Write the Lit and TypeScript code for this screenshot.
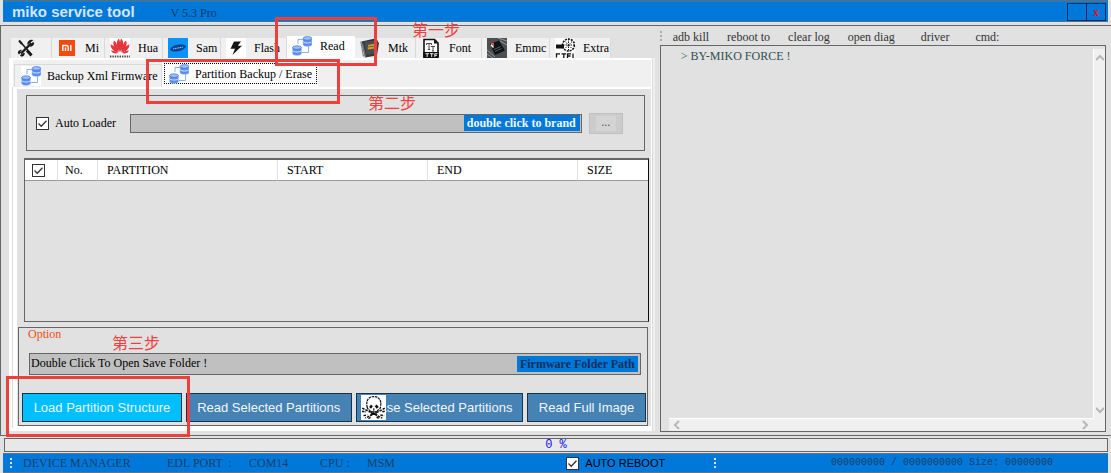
import { LitElement, html, css, svg, nothing } from "lit";
import { customElement, property, state } from "lit/decorators.js";
import { classMap } from "lit/directives/class-map.js";

const databases = svg`
  <path d="M6 8V3.500H12M10 16.500H16.500V10" fill="none" stroke="#8fb0dc"/>
  <g fill="#5b8def" stroke="#a9c8fa" stroke-width=".6">
    <path d="M11 2.500v6c0 2.600 9 2.600 9 0v-6z"/><path d="M.500 11.500v6c0 2.600 9 2.600 9 0v-6z"/>
  </g>
  <g fill="#9cc0fb" stroke="#3e6fd0" stroke-width=".7">
    <ellipse cx="15.500" cy="2.400" rx="4.400" ry="1.800"/><ellipse cx="5" cy="11.600" rx="4.400" ry="1.800"/>
  </g>
  <path d="M11 5.500c1 2 8 2 9 0M.500 14.500c1 2 8 2 9 0" fill="none" stroke="#d3e3ff"/>`;

const icons: Record<string, unknown> = {
  tools: svg`
    <path d="M4 3.500 15 16" stroke="#1a1a1a" stroke-width="1.600"/>
    <path d="M11 12.500 15.500 17.500" stroke="#1a1a1a" stroke-width="3"/>
    <path d="M3 2.500 6 6" stroke="#1a1a1a" stroke-width="2"/>
    <path d="M5 15.500 14.500 6" stroke="#1a1a1a" stroke-width="2.400"/>
    <path d="M17.500 4.500 15.500 6.500 13.500 4.500 15.600 2.600A3.500 3.500 0 0 0 12 6.500M17.500 4.500A3.500 3.500 0 0 1 14 8" fill="none" stroke="#1a1a1a" stroke-width="1.500"/>
    <path d="M2.500 16 4.500 14M4.500 18 6.500 16M2.500 15a3 3 0 0 1 3-2.500M5.500 18a3 3 0 0 0 2.500-3" fill="none" stroke="#1a1a1a" stroke-width="1.500"/>`,
  mi: svg`<rect x="2" y="2" width="16" height="16" fill="#f4490c"/>
    <path d="M5.800 13V7.500H9.500Q11.200 7.500 11.200 9.200V13M8.500 9.500V13M13.800 7V13" fill="none" stroke="#fff" stroke-width="1.400"/>`,
  huawei: svg`<rect width="20" height="20" fill="#fff"/>
    <g fill="#e5343c">
      <path d="M9.600 14C6 9 6 3 8.800.800 10.500 3 10.500 9 9.600 14z"/><path d="M10.400 14C14 9 14 3 11.200.800 9.500 3 9.500 9 10.400 14z"/>
      <path d="M8.800 14.200C3.500 10.500 2.500 5 4 2.800 6.500 4 8 9 8.800 14.200z"/><path d="M11.200 14.200C16.500 10.500 17.500 5 16 2.800 13.500 4 12 9 11.200 14.200z"/>
      <path d="M8.300 14.600C3 13.500.200 9.500.700 6.500 3.500 7 6.500 10.500 8.300 14.600z"/><path d="M11.700 14.600C17 13.500 19.800 9.500 19.300 6.500 16.500 7 13.500 10.500 11.700 14.600z"/>
      <path d="M8 15.100C5 16.300 2 15 1 12.600 3.500 12.500 6 13.500 8 15.100z"/><path d="M12 15.100C15 16.300 18 15 19 12.600 16.500 12.500 14 13.500 12 15.100z"/>
    </g>
    <path d="M0 18.500H20" stroke="#4a4242" stroke-width="2" stroke-dasharray="1.400 1"/>`,
  samsung: svg`<rect width="20" height="20" fill="#0a93f5"/>
    <ellipse cx="10" cy="10" rx="8" ry="3.200" fill="#0a3f92" transform="rotate(-12 10 10)"/>
    <path d="M5 11 15 9" stroke="#8ec4ee" stroke-width="1.200" stroke-dasharray="1.200 .6"/>`,
  flash: svg`<rect width="20" height="20" fill="#fff"/>
    <path d="M8 3.500H15L11.800 7.800H16L6.500 17 9 10.800H4.500z" fill="#141414"/>`,
  db: databases,
  chip: svg`<path d="M1.500 3.500 15 .500 19 5 17 17.500 5 19.500z" fill="#34373a"/>
    <path d="M.800 3.500 3.500 18.500M2.500 5.500 5.500 19" stroke="#757a7e" stroke-width="1.200"/>
    <path d="M4.500 3.500 18 2.500 16.500 15.500 6.500 17z" fill="#4a4d4f"/>
    <path d="M8 7.800 15.500 6.500M7.800 10.500 14.500 9.500" stroke="#d79a2b" stroke-width="1.800"/>`,
  ttf: svg`<path d="M3 1.500H13.500L17 5V18.500H3z" fill="#fff" stroke="#111" stroke-width="1.600"/>
    <path d="M13 1.500V5.500H17z" fill="#111"/>
    <path d="M5.500 7V5.500H10.500V7M8 5.500V11.500M6.800 11.500H9.200M9.800 8.500H14M12 8V13M10.900 13H13.100" fill="none" stroke="#333" stroke-width=".9"/>
    <rect x="2.200" y="14" width="15.600" height="6" fill="#111"/>
    <path d="M4.500 15.700H8M6.200 15.700V19M9 15.700H12.500M10.700 15.700V19M13.800 19V15.700H16.500M13.800 17.300H16" fill="none" stroke="#fff" stroke-width=".9"/>`,
  emmc: svg`<rect width="20" height="20" fill="#4d5052"/>
    <path d="M0 16 6 20M0 12 8 19M13 3 20 7M11 0 20 3" stroke="#92979a" stroke-width="1"/>
    <path d="M3 6 12 2.500 18 12.500 8 17z" fill="#101214"/>
    <path d="M7 11.500 13.500 8.500M8 13.500 14.500 10.500" stroke="#6e7375" stroke-width=".8"/>
    <rect x="4" y="5" width="3" height="3" fill="#e8465a"/>
    <path d="M4 7 6.500 9.500" stroke="#fff" stroke-width="1.400"/>`,
  extra: svg`<rect width="20" height="20" fill="#fff"/>
    <circle cx="13.500" cy="7" r="6" fill="#fff" stroke="#111" stroke-width="1.600" stroke-dasharray="2 1"/>
    <path d="M1 8.500H9" stroke="#111" stroke-width="4"/>
    <path d="M10 3.500 17 10.500M17 3.500 10 10.500M13.500 1V13M8 7H19" stroke="#111" stroke-dasharray="1.500 1"/>
    <path d="M5 15.800H1.500V19.500M6.500 15.800H11M8.800 15.800V20M16 15.800H12.500V20M12.500 18H15.500M18 15.500V20" fill="none" stroke="#111" stroke-width="1.300"/>`,
  skull: svg`<rect width="20" height="20" fill="#fff"/>
    <path d="M5 10C3.500 4 6.500 1.200 10.200 1.200S17 4 15.500 10C15 12 13 11.800 12.800 13.500H7.600C7.500 11.800 5.500 12 5 10z" fill="#fff" stroke="#111" stroke-width="1" stroke-dasharray="2 .6"/>
    <path d="M6.500 9.500 8 7.500 9.500 9 8 11zM11 9 12.500 7.500 14.200 9.500 12.500 11z" fill="#111"/>
    <path d="M10.200 10.500V12.500M8.500 13V15.500M10.200 13V16M12 13V15.500M7.500 15.500H13" stroke="#111" stroke-width=".9"/>
    <path d="M1 10.500 4 12 17 18.500M19 10.500 16.500 12 3.500 18.500M.800 13 4 13.500M19 13 16.500 13.500M2 16.500 5 16M15.500 16 18.500 16.500M6 19 8 17.500M12.500 17.500 14.500 19" fill="none" stroke="#111" stroke-width="1.200" stroke-dasharray="2 .8"/>`,
};

const icon = (name: string) =>
  html`<svg class="icon" viewBox="0 0 20 20" aria-hidden="true">${icons[name]}</svg>`;

@customElement("tick-box")
export class TickBox extends LitElement {
  @property() label = "";
  @property({ type: Boolean }) bare = false;

  static styles = css`
    :host { display: flex; }
    label { display: flex; align-items: center; gap: 6px; white-space: nowrap; }
    input {
      appearance: none; flex: none; width: 13px; height: 13px; margin: 0;
      border: 1px solid #333; background: #fff;
    }
    input:checked {
      background: #fff url("data:image/svg+xml,%3Csvg xmlns='http://www.w3.org/2000/svg' viewBox='0 0 11 11'%3E%3Cpath d='M1.500 5.500 4.200 8.200 9.500 2.700' fill='none' stroke='%23333' stroke-width='1.300'/%3E%3C/svg%3E");
    }
  `;

  render() {
    return html`<label>
      <input type="checkbox" checked aria-label=${this.bare ? this.label : nothing} />
      ${this.bare ? nothing : html`<span>${this.label}</span>`}
    </label>`;
  }
}

@customElement("app-root")
export class AppRoot extends LitElement {
  @state() private section = "Read";
  @state() private page = "Partition Backup / Erase";

  private sections = [
    { id: "Tools", icon: "tools", text: "", cls: "w40" },
    { id: "Mi", icon: "mi", text: "Mi", cls: "w53" },
    { id: "Hua", icon: "huawei", text: "Hua", cls: "w58" },
    { id: "Sam", icon: "samsung", text: "Sam", cls: "w58" },
    { id: "Flash", icon: "flash", text: "Flash", cls: "w66" },
    { id: "Read", icon: "db", text: "Read", cls: "w68" },
    { id: "Mtk", icon: "chip", text: "Mtk", cls: "w61" },
    { id: "Font", icon: "ttf", text: "Font", cls: "w66" },
    { id: "Emmc", icon: "emmc", text: "Emmc", cls: "w68" },
    { id: "Extra", icon: "extra", text: "Extra", cls: "w61" },
  ];

  static styles = css`
    :host {
      display: block; position: relative;
      font: 12px/16px "Liberation Serif", "Noto Sans CJK SC", serif;
      color: #000; background: #e1e1e1;
    }
    * { box-sizing: border-box; }
    button, input { font: inherit; color: inherit; margin: 0; border-radius: 0; }
    button { padding: 0; white-space: nowrap; }
    .icon { flex: none; width: 20px; height: 20px; display: block; }
    .app { min-height: 100vh; display: flex; flex-direction: column; }

    .title {
      display: flex; align-items: center; height: 22px; margin: 0 3px 3px;
      padding: 0 2px 0 9px; background: #0078d9;
      border: solid #3a769f; border-width: 2px 0 1px;
    }
    .title h1 { margin: 0; font: bold 15px/18px "Liberation Sans", sans-serif; color: #d6e6f8; }
    .version { margin-left: 36px; padding-top: 3px; color: #123a66; }
    .window { display: flex; margin-left: auto; }
    .window button {
      width: 20px; height: 18px; background: none; border: 1px solid #0b2b52;
    }
    .window button + button { margin-left: -1px; }
    .window .close { color: #e01028; font-weight: bold; }

    .main {
      flex: 1; display: flex; align-items: stretch;
      border: solid #666; border-width: 1px 0 1px 1px;
    }
    .left {
      flex: 656 1 0; min-width: 0; display: flex; flex-direction: column;
      padding: 10px 0 4px 8px;
    }
    .tabs { display: flex; align-items: flex-end; height: 22px; padding-left: 2px; }
    .tab {
      display: flex; align-items: center; gap: 8px; height: 20px; padding: 0 0 0 5px;
      background: #f0f0f0; border: 0; border-right: 1px solid #d9d9d9; overflow: hidden;
    }
    .tab.on { height: 22px; padding-bottom: 2px; background: #fff; border: 0; }
    .w40 { width: 41px; } .w53 { width: 53px; } .w58 { width: 58px; } .w61 { width: 61px; }
    .w66 { width: 66px; } .w68 { width: 68px; }
    .sheet {
      flex: 1; display: flex; flex-direction: column;
      border: solid #fff; border-width: 2px 1px 3px 4px; background: #f0f0f0;
      margin-right: 2px; box-shadow: 1px 0 #dadada, 3px 0 #f0f0f0;
    }
    .pages { display: flex; align-items: flex-end; height: 27px; padding-left: 1px; }
    .pages .tab { height: 23px; gap: 6px; width: 148px; padding-left: 6px; border: solid #dadada; border-width: 1px 1px 0; }
    .pages .tab .icon { background: #fff; }
    .pages .tab.on { height: 25px; width: 156px; padding: 0 0 2px 2px; background: #fff; border: 0; }
    .pages .tab.on .icon { background: none; }
    .pages .focus {
      display: flex; align-items: center; gap: 6px; padding: 0 4px; height: 21px; width: 153px;
      border: 1px dotted #000;
    }
    .body {
      flex: 1; display: flex; flex-direction: column; background: #e1e1e1;
      border: solid #fff; border-width: 2px 0 2px 4px; padding: 6px 2px 0 1px;
      box-shadow: -1px 0 #dadada;
    }
    .group { border: 1px solid #666; }
    .loader {
      display: flex; align-items: center; height: 56px; margin: 0 4px 7px 8px; padding: 0 21px 0 9px;
    }
    .field { display: flex; align-items: center; background: #c0c0c0; border: 1px solid #666; }
    .field input {
      flex: 1; min-width: 0; border: 0; padding: 0 1px; background: none; outline: none;
    }
    .field button { border: 0; background: #0078d9; font-weight: bold; padding: 0 3px; }
    .loader .field { flex: 1; height: 19px; margin: 0 7px 0 14px; }
    .loader .field button { color: #f2f7fd; margin-right: 1px; height: 16px; padding: 0 4px 0 3px; }
    .browse {
      width: 34px; height: 21px; background: #cccccc; border: 1px solid #bfbfbf; color: #555;
    }
    .browse span { display: block; margin: 0 6px; height: 15px; line-height: 12px; background: #d4d4d4; }
    .list {
      flex: 1; min-height: 120px; border: 1px solid #666; border-top-width: 2px; border-right-color: #111;
      margin: 0 0 5px 6px;
    }
    table { width: 100%; table-layout: fixed; border-collapse: separate; border-spacing: 0; background: #fff; }
    th {
      height: 21px; padding: 0 0 0 9px; text-align: left; font-weight: normal;
      border-right: 1px solid #e0e0e0; border-bottom: 1px solid #999;
    }
    th:first-child { padding-left: 7px; }
    th:nth-child(2) { padding-left: 7px; }
    th:last-child { border-right: 0; }
    .c1 { width: 33px; } .c2 { width: 40px; } .c3 { width: 180px; } .c4, .c5 { width: 150px; }

    .option { height: 99px; padding: 0 1px 3px 3px; margin: 0 1px 0 0; display: flex; flex-direction: column; }
    .option h2 { margin: -2px 0 11px 6px; font: inherit; color: #f0500a; }
    .option .field { height: 22px; margin: 0 5px 0 7px; }
    .option .field button { color: #10305c; margin-right: 2px; }
    .option .field input { padding-bottom: 2px; }
    .actions { display: flex; gap: 4px; margin-top: auto; }
    .actions button {
      height: 29px; font: 13px/16px "Liberation Sans", sans-serif; color: #f0f6fb; position: relative;
      background: #4682b4; border: 1px solid #16334c; overflow: hidden;
    }
    .actions .load { flex: 160 1 0; background: #00bfff; color: #e3f8ff; }
    .actions .read { flex: 166 1 0; }
    .actions .erase { flex: 168 1 0; }
    .actions .full { flex: 118 1 0; }
    .erase .icon { position: absolute; left: 4px; top: 1px; width: 25px; height: 25px; }

    .right {
      flex: 454 1 0; min-width: 0; display: flex; flex-direction: column; padding: 0 5px 3px 6px;
    }
    .menu { display: flex; height: 19px; padding-top: 3px; color: #333; }
    .grip { flex: none; width: 2px; height: 11px; margin: 2px 11px 0 0;
      background: repeating-linear-gradient(#aaa 0 2px, transparent 2px 4px); }
    .menu button { border: 0; background: none; color: #333; margin-right: 18px; }
    .menu .wide { margin-right: 26px; }
    .log {
      flex: 1; display: grid; grid-template: 1fr 13px / 1fr 12px;
      border: 1px solid #666; padding: 3px 0 0 8px;
    }
    .log pre { margin: -1px 0 0; padding: 0 12px; font: inherit; color: #2f4f4f; }
    .bar { display: flex; justify-content: space-between; align-items: center; background: #f0f0f0; }
    .bar.v { flex-direction: column; border-left: 1px solid #fff; padding: 4px 0 3px; }
    .bar.h { border-top: 1px solid #fff; padding: 0 4px; }
    .bar svg { width: 8px; height: 10px; display: block; fill: none; stroke: #b8b8b8; stroke-width: 2; }
    .corner { background: #f0f0f0; }

    .progress {
      height: 14px; margin: 2px 3px 1px 4px; border: 1px solid #666; background: #e8e8e8;
      text-align: center; white-space: pre; color: #1010e8;
      font: 12px/12px "Liberation Mono", monospace;
    }
    .status {
      display: flex; align-items: center; height: 20px; margin: 0 3px 0; padding: 0 55px 0 7px;
      background: #0078d9; border: solid #5f7488; border-width: 1px 0; color: #1f3f66;
    }
    .status .grip { background: repeating-linear-gradient(#d6e6f6 0 2px, transparent 2px 4px); margin: 0 11px 0 0; }
    .s1 { width: 144px; } .s2 { width: 82px; } .s3 { width: 71px; } .s4 { width: 47px; } .s5 { flex: 200 1 0; }
    .status tick-box { font: 11px/16px "Liberation Sans", sans-serif; color: #000; }
    .status .second { margin: 0 0 0 49px; }
    .bytes { flex: 338 1 0; text-align: right; font: 10px/16px "Liberation Mono", monospace; white-space: pre; }

    .mark { position: absolute; border: 3px solid #ee3f3f; pointer-events: none; }
    .m1 { left: 275px; top: 17px; width: 102px; height: 49px; }
    .m2 { left: 146px; top: 59px; width: 194px; height: 45px; }
    .m3 { left: 6px; bottom: 36px; width: 184px; height: 61px; }
    .step { position: absolute; font: 16px/18px "Noto Sans CJK SC", sans-serif; color: #ee3f3f; pointer-events: none; }
    .t1 { left: 412px; top: 20px; }
    .t2 { left: 368px; top: 93px; }
    .t3 { left: 112px; bottom: 122px; }
  `;

  private pageTab(name: string) {
    const on = this.page === name;
    const inner = html`${icon("db")}<span>${name}</span>`;
    return html`<button role="tab" aria-selected=${on} class=${classMap({ tab: true, on })}
      @click=${() => (this.page = name)}>${on ? html`<span class="focus">${inner}</span>` : inner}</button>`;
  }

  render() {
    return html`
      <div class="app">
        <header class="title">
          <h1>miko service tool</h1><span class="version">V 5.3 Pro</span>
          <div class="window">
            <button aria-label="Minimize"></button><button class="close" aria-label="Close">x</button>
          </div>
        </header>

        <main class="main">
          <section class="left">
            <div class="tabs" role="tablist">
              ${this.sections.map((s) => {
                const on = this.section === s.id;
                return html`<button role="tab" aria-label=${s.id} aria-selected=${on}
                  class=${classMap({ tab: true, on, [s.cls]: true })}
                  @click=${() => (this.section = s.id)}>${icon(s.icon)}<span>${s.text}</span></button>`;
              })}
            </div>
            <div class="sheet">
              <div class="pages" role="tablist">
                ${this.pageTab("Backup Xml Firmware")}${this.pageTab("Partition Backup / Erase")}
              </div>
              <div class="body">
                <div class="group loader">
                  <tick-box label="Auto Loader"></tick-box>
                  <div class="field">
                    <input aria-label="Loader file" readonly />
                    <button>double click to brand</button>
                  </div>
                  <button class="browse" aria-label="Browse"><span>...</span></button>
                </div>
                <div class="list">
                  <table>
                    <thead><tr>
                      <th class="c1"><tick-box bare label="Select all"></tick-box></th>
                      <th class="c2">No.</th><th class="c3">PARTITION</th>
                      <th class="c4">START</th><th class="c5">END</th><th>SIZE</th>
                    </tr></thead>
                  </table>
                </div>
                <div class="group option">
                  <h2>Option</h2>
                  <div class="field">
                    <input aria-label="Save folder" readonly value="Double Click To Open Save Folder !" />
                    <button>Firmware Folder Path</button>
                  </div>
                  <div class="actions">
                    <button class="load">Load Partition Structure</button>
                    <button class="read">Read Selected Partitions</button>
                    <button class="erase">Erase Selected Partitions${icon("skull")}</button>
                    <button class="full">Read Full Image</button>
                  </div>
                </div>
              </div>
            </div>
          </section>

          <section class="right">
            <nav class="menu">
              <span class="grip"></span>
              <button>adb kill</button><button>reboot to</button><button>clear log</button>
              <button class="wide">open diag</button><button class="wide">driver</button><button>cmd:</button>
            </nav>
            <div class="log">
              <pre>&gt; BY-MIKO FORCE !</pre>
              <div class="bar v">
                <svg viewBox="0 0 8 10"><path d="M0 7 4 3 8 7" /></svg>
                <svg viewBox="0 0 8 10"><path d="M0 3 4 7 8 3" /></svg>
              </div>
              <div class="bar h">
                <svg viewBox="0 0 8 10"><path d="M6 1 2 5 6 9" /></svg>
                <svg viewBox="0 0 8 10"><path d="M2 1 6 5 2 9" /></svg>
              </div>
              <div class="corner"></div>
            </div>
          </section>
        </main>

        <div class="progress" role="progressbar" aria-valuenow="0">0 %</div>
        <footer class="status">
          <span class="grip"></span>
          <span class="s1">DEVICE MANAGER</span><span class="s2">EDL PORT &nbsp;:</span>
          <span class="s3">COM14</span><span class="s4">CPU :</span><span class="s5">MSM</span>
          <tick-box label="AUTO REBOOT"></tick-box>
          <span class="grip second"></span>
          <span class="bytes">000000000 / 0000000000 Size: 00000000</span>
        </footer>
      </div>

      <div class="mark m1"></div><div class="mark m2"></div><div class="mark m3"></div>
      <span class="step t1">第一步</span><span class="step t2">第二步</span><span class="step t3">第三步</span>
    `;
  }
}
